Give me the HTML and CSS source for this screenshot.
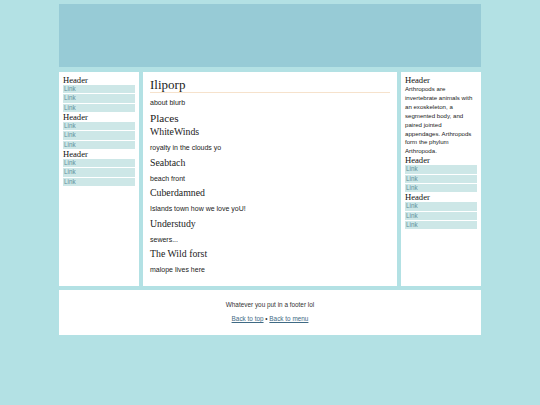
FILE: index.html
```html
<!DOCTYPE html>
<html>
<head>
<meta charset="utf-8">
<link rel="stylesheet" href="styles.css">
</head>
<body>
<div class="page">
  <div class="banner"></div>
  <div class="columns">
    <div class="side">
      <div class="side-head">Header</div>
      <a class="side-link" href="#">Link</a>
      <a class="side-link" href="#">Link</a>
      <a class="side-link" href="#">Link</a>
      <div class="side-head">Header</div>
      <a class="side-link" href="#">Link</a>
      <a class="side-link" href="#">Link</a>
      <a class="side-link" href="#">Link</a>
      <div class="side-head">Header</div>
      <a class="side-link" href="#">Link</a>
      <a class="side-link" href="#">Link</a>
      <a class="side-link" href="#">Link</a>
    </div>
    <div class="main">
      <h1 class="title">Iliporp</h1>
      <p class="text first">about blurb</p>
      <h2 class="section">Places</h2>
      <h3 class="place first">WhiteWinds</h3>
      <p class="text">royalty in the clouds yo</p>
      <h3 class="place">Seabtach</h3>
      <p class="text">beach front</p>
      <h3 class="place">Cuberdamned</h3>
      <p class="text">Islands town how we love yoU!</p>
      <h3 class="place">Understudy</h3>
      <p class="text">sewers...</p>
      <h3 class="place">The Wild forst</h3>
      <p class="text">malope lives here</p>
    </div>
    <div class="side">
      <div class="side-head">Header</div>
      <p class="side-text">Arthropods are invertebrate animals with an exoskeleton, a segmented body, and paired jointed appendages. Arthropods form the phylum Arthropoda.</p>
      <div class="side-head">Header</div>
      <a class="side-link" href="#">Link</a>
      <a class="side-link" href="#">Link</a>
      <a class="side-link" href="#">Link</a>
      <div class="side-head">Header</div>
      <a class="side-link" href="#">Link</a>
      <a class="side-link" href="#">Link</a>
      <a class="side-link" href="#">Link</a>
    </div>
  </div>
  <div class="footer">
    <p class="foot-line">Whatever you put in a footer lol</p>
    <p class="foot-line links"><a href="#">Back to top</a> &bull; <a href="#">Back to menu</a></p>
  </div>
</div>
</body>
</html>
```

FILE: styles.css
```css
html, body {
  margin: 0;
  padding: 0;
  background: #b3e1e4;
}
body {
  padding-top: 4px;
  font-family: "Liberation Sans", Arial, sans-serif;
  color: #333;
}
.page {
  width: 422px;
  margin: 0 auto;
}
.banner {
  height: 63px;
  background: #97cbd6;
  margin-bottom: 5px;
}
.columns {
  display: flex;
  gap: 4px;
  align-items: stretch;
}
.side {
  width: 80px;
  box-sizing: border-box;
  padding: 4px;
  background: #fff;
}
.side-head {
  font-family: "Liberation Serif", "Times New Roman", serif;
  font-size: 8.6px;
  line-height: 9px;
  color: #111;
}
.side-link {
  display: block;
  background: #cde7e7;
  color: #5f8e9a;
  text-decoration: none;
  font-size: 6.3px;
  line-height: 8.33px;
  padding-left: 1px;
  margin-bottom: 1px;
}
.side-text {
  margin: 0;
  font-size: 6.1px;
  line-height: 8.9px;
  color: #222;
}
.main {
  width: 254px;
  box-sizing: border-box;
  padding: 6px 7px 12px 7px;
  background: #fff;
}
.title {
  margin: 0;
  font-family: "Liberation Serif", "Times New Roman", serif;
  font-weight: normal;
  font-size: 13px;
  line-height: 14px;
  border-bottom: 1px solid #f6e2cc;
  color: #222;
}
.text {
  margin: 5px 0 0 0;
  font-size: 7px;
  line-height: 9px;
  color: #222;
}
.section {
  margin: 5px 0 0 0;
  font-family: "Liberation Serif", "Times New Roman", serif;
  font-weight: normal;
  font-size: 11.2px;
  line-height: 13px;
  color: #222;
}
.place {
  margin: 4.5px 0 0 0;
  font-family: "Liberation Serif", "Times New Roman", serif;
  font-weight: normal;
  font-size: 9.8px;
  line-height: 12px;
  color: #222;
}
.place.first {
  margin-top: 1px;
}
.footer {
  margin-top: 4px;
  background: #fff;
  padding: 10px 0 12px 0;
  text-align: center;
}
.foot-line {
  margin: 0;
  font-size: 6.4px;
  line-height: 9px;
  color: #333;
}
.foot-line.links {
  margin-top: 5px;
}
.foot-line a {
  color: #3f6a84;
  text-decoration: underline;
}
```
